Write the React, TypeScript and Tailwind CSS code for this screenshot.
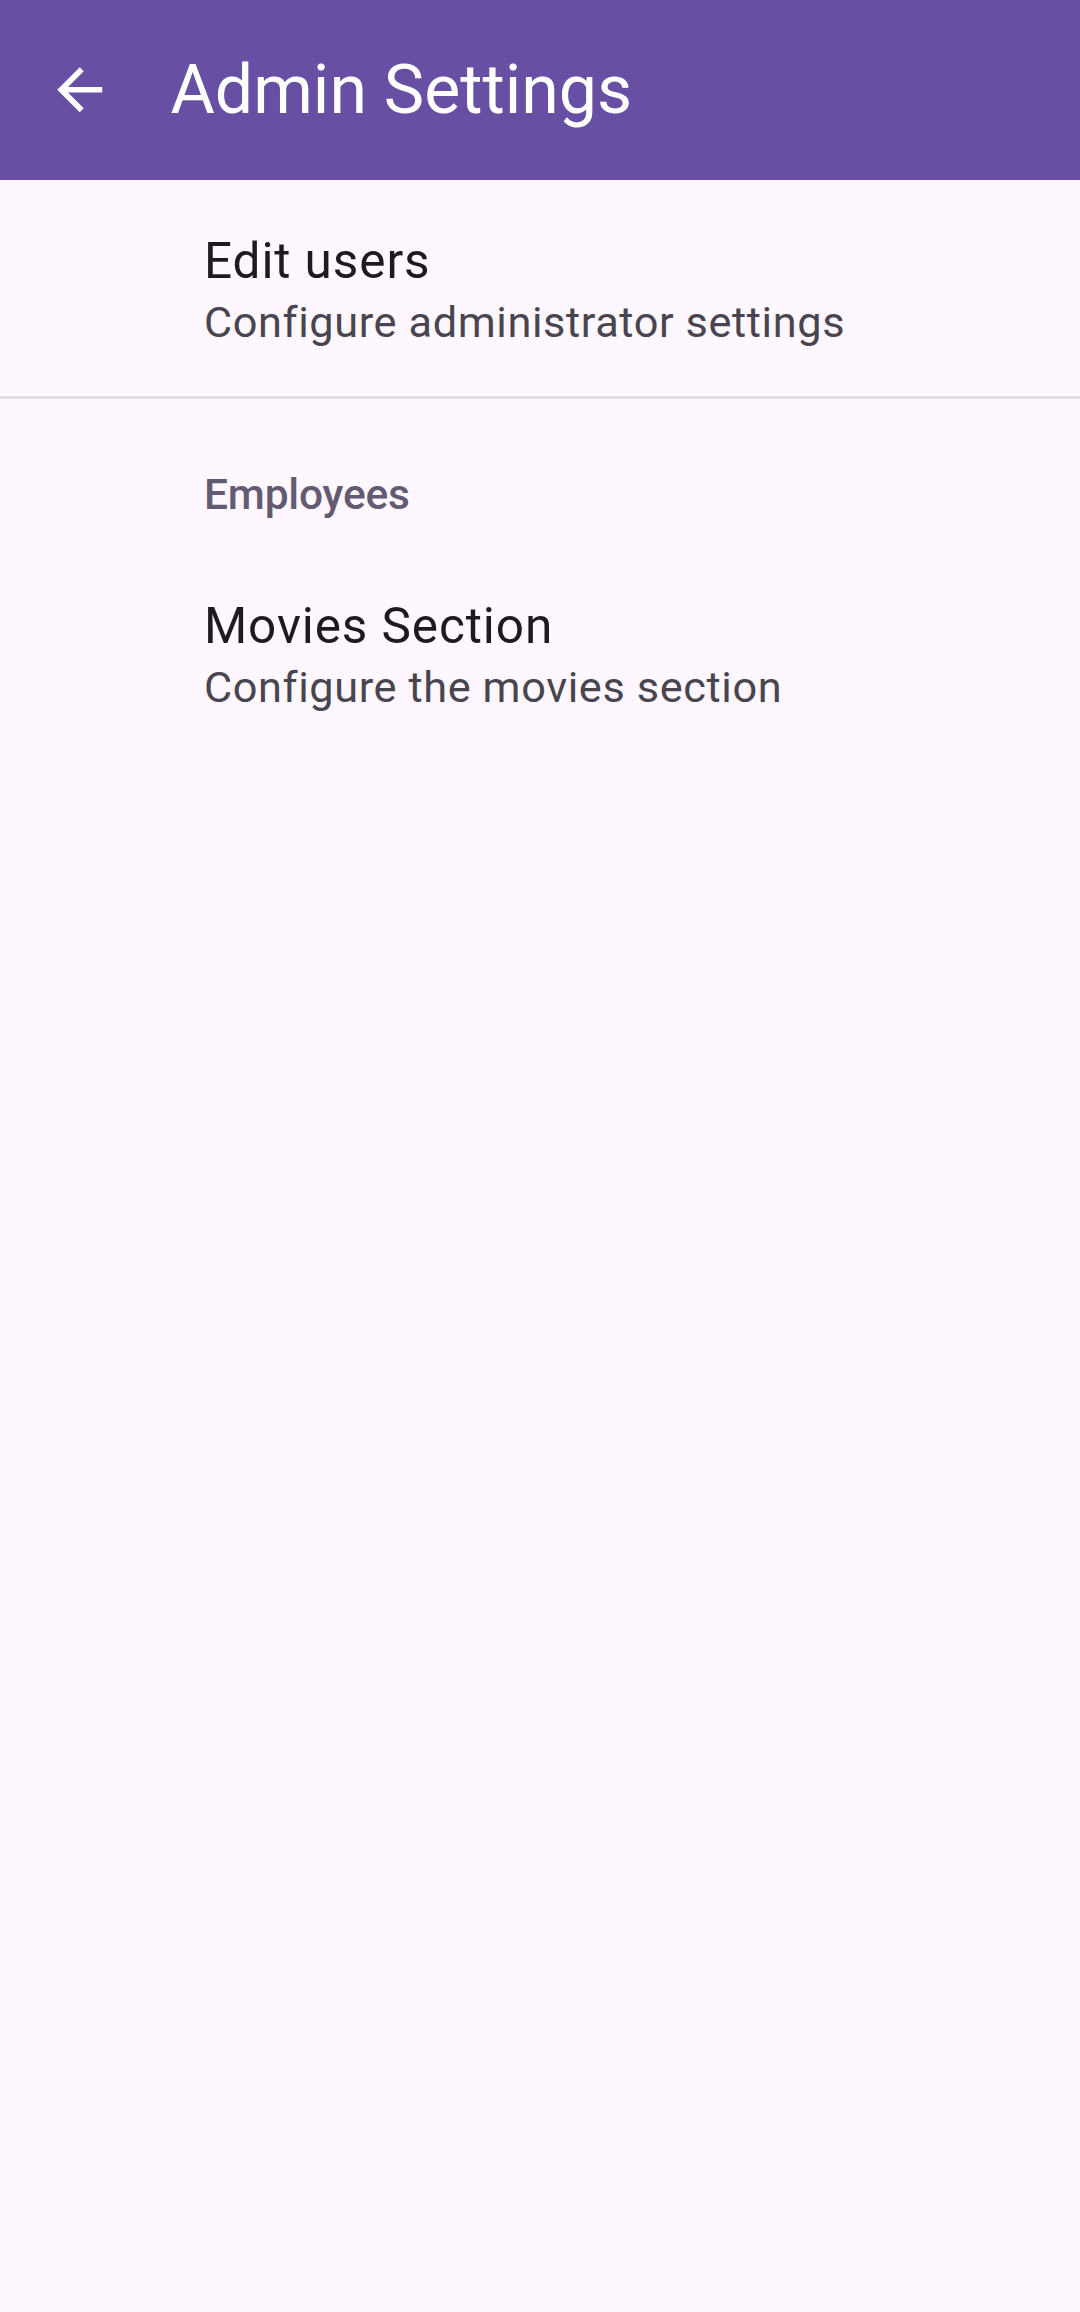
type Pref = { title: string; summary: string }

function PrefItem({ pref, className }: { pref: Pref; className?: string }) {
  return (
    <div className={`flex flex-col justify-center pl-[204px] pr-12 ${className ?? ''}`}>
      <div className="text-[49.5px] leading-[66px] tracking-[0.9px] text-[#1d1b20]">{pref.title}</div>
      <div className="text-[43.3px] leading-[58px] tracking-[0.6px] text-[#49454f]">{pref.summary}</div>
    </div>
  )
}

function BackArrow() {
  return (
    <svg viewBox="0 0 24 24" className="h-[67.5px] w-[67.5px]" fill="white">
      <path d="M20 11H7.83l5.59-5.59L12 4l-8 8 8 8 1.41-1.41L7.83 13H20v-2z" />
    </svg>
  )
}

export default function App() {
  const editUsers: Pref = { title: 'Edit users', summary: 'Configure administrator settings' }
  const movies: Pref = { title: 'Movies Section', summary: 'Configure the movies section' }

  return (
    <div className="min-h-[2312px] w-[1080px] bg-[#fef7ff] font-['Roboto',sans-serif]">
      <header className="flex h-[180px] items-center bg-[#6750a4]">
        <div className="ml-[46px] flex">
          <BackArrow />
        </div>
        <h1 className="ml-[57px] text-[68px] leading-none text-white">Admin Settings</h1>
      </header>

      <PrefItem pref={editUsers} className="h-[216px] pt-[3px]" />
      <div className="h-[3px] bg-[#e0dce1]" />

      <div className="pl-[204px] pt-[67px] text-[42.5px] font-medium leading-[58px] tracking-[-0.2px] text-[#625b71]">
        Employees
      </div>

      <PrefItem pref={movies} className="pt-[69px] pb-[45px]" />
    </div>
  )
}
